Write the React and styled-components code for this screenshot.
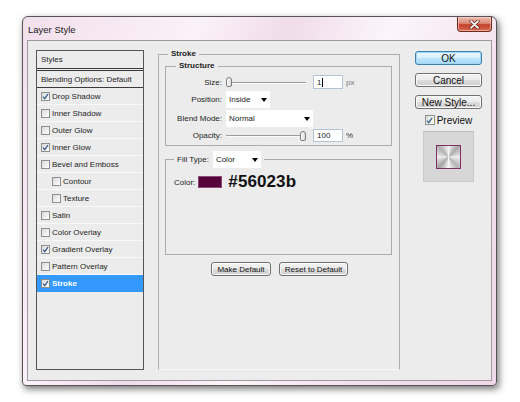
import React from "react";
import styled, { createGlobalStyle } from "styled-components";

const GlobalStyle = createGlobalStyle`
  html, body {
    margin: 0;
    padding: 0;
    background: #ffffff;
  }
  body {
    font-family: "Liberation Sans", Arial, sans-serif;
    color: #1c1c1c;
  }
`;

const Page = styled.div`
  width: 520px;
  height: 402px;
  padding: 16px 0 0 22px;
  box-sizing: border-box;
`;

const Window = styled.div`
  width: 475px;
  height: 370px;
  box-sizing: border-box;
  display: flex;
  flex-direction: column;
  padding: 0 4px 4px;
  border: 1px solid #58535a;
  border-radius: 6px 6px 4px 4px;
  background: linear-gradient(
    115deg,
    #f2e0ec 0%,
    #fbf1f8 28%,
    #f0dcea 42%,
    #fcf5fa 58%,
    #f3e1ed 78%,
    #efd8e7 100%
  );
  box-shadow: 2px 3px 7px rgba(0, 0, 0, 0.55);
`;

const TitleBar = styled.div`
  height: 23px;
  flex: none;
  display: flex;
  justify-content: space-between;
  align-items: flex-start;
`;

const Title = styled.span`
  font-size: 9.5px;
  color: #1b1b1b;
  padding: 7px 0 0 1px;
`;

const CloseButton = styled.div`
  width: 35px;
  height: 15px;
  box-sizing: border-box;
  border: 1px solid #6f2a20;
  border-top: none;
  border-radius: 0 0 4px 4px;
  background: linear-gradient(#eebcb0 0%, #dc8a76 45%, #c2412c 55%, #d8684f 100%);
  box-shadow: inset 0 0 0 1px rgba(255, 220, 210, 0.55);
  display: flex;
  align-items: center;
  justify-content: center;
`;

const Client = styled.div`
  flex: 1;
  display: flex;
  align-items: stretch;
  background: #ececec;
  border: 1px solid #a3979f;
  padding: 8px 0 10px 8px;
`;

/* ---------- styles list ---------- */

const StyleList = styled.div`
  width: 108px;
  box-sizing: border-box;
  margin-top: 1px;
  border: 1px solid #565656;
  display: flex;
  flex-direction: column;
  font-size: 8px;
`;

const ListHead = styled.div`
  height: ${(p) => p.$h}px;
  display: flex;
  align-items: center;
  padding-left: 4px;
  border-bottom: ${(p) => p.$double ? "3px double #3b3b3b" : "1px solid #3b3b3b"};
`;

const ListRow = styled.div`
  height: 16px;
  display: flex;
  align-items: center;
  gap: 2px;
  padding-left: ${(p) => (p.$indent ? 15 : 4)}px;
  border-bottom: 1px solid ${(p) => (p.$active ? "#3399ff" : "#f9f9f9")};
  background: ${(p) => (p.$active ? "#3399ff" : "transparent")};
  color: ${(p) => (p.$active ? "#ffffff" : "#1c1c1c")};
  font-weight: ${(p) => (p.$active ? "bold" : "normal")};
`;

const Box = styled.span`
  width: ${(p) => p.$size || 9}px;
  height: ${(p) => p.$size || 9}px;
  box-sizing: border-box;
  flex: none;
  border: 1px solid #8e8f8f;
  background: linear-gradient(135deg, #d9d9d9, #ffffff);
  display: inline-flex;
  align-items: center;
  justify-content: center;
`;

function Check({ on, size }) {
  return (
    <Box $size={size}>
      {on && (
        <svg width="7" height="7" viewBox="0 0 7 7">
          <path d="M1 3.6 L2.8 5.6 L6 1" fill="none" stroke="#37598a" strokeWidth="1.3" />
        </svg>
      )}
    </Box>
  );
}

/* ---------- groups ---------- */

const Panel = styled.fieldset`
  width: 242px;
  box-sizing: border-box;
  margin: 0 0 0 14px;
  padding: 0 7px 0 6px;
  border: 1px solid #acacac;
  border-bottom-color: #f7f7f7;
  display: flex;
  flex-direction: column;
  min-width: 0;
`;

const Group = styled.fieldset`
  margin: ${(p) => p.$top}px 0 0;
  padding: ${(p) => p.$pad};
  border: 1px solid #ababab;
  min-width: 0;
`;

const Legend = styled.legend`
  margin-left: ${(p) => p.$left}px;
  padding: 0 3px;
  font-size: 8px;
  font-weight: bold;
  line-height: 10px;
  color: #222;
`;

const FillLegend = styled.legend`
  margin-left: 8px;
  padding: 0 3px;
  height: 17px;
  display: flex;
  align-items: center;
  gap: 4px;
  font-size: 8px;
`;

const Rows = styled.div`
  display: flex;
  flex-direction: column;
  gap: 2px;
`;

const Row = styled.div`
  height: ${(p) => p.$h}px;
  display: flex;
  align-items: center;
  font-size: 8px;
`;

const Label = styled.span`
  width: 56px;
  margin-right: 4px;
  text-align: right;
  color: #1e1e1e;
`;

const Slider = styled.div`
  width: 80px;
  height: 11px;
  display: flex;
  align-items: center;
`;

const Track = styled.span`
  flex: ${(p) => p.$grow};
  height: 1px;
  background: #9c9c9c;
  box-shadow: 0 1px 0 #fafafa;
`;

const Knob = styled.span`
  width: 6px;
  height: 10px;
  box-sizing: border-box;
  flex: none;
  border: 1px solid #7c7c7c;
  border-radius: 3px 3px 2px 2px;
  background: linear-gradient(90deg, #ffffff, #dadada);
`;

const NumberBox = styled.div`
  width: 30px;
  height: ${(p) => p.$h}px;
  box-sizing: border-box;
  margin-left: 7px;
  padding-left: 3px;
  display: flex;
  align-items: center;
  background: #fff;
  border: 1px solid #b6c3d3;
`;

const Caret = styled.span`
  width: 1px;
  height: 9px;
  margin-left: 1px;
  background: #000;
`;

const Unit = styled.span`
  margin-left: 3px;
  color: ${(p) => p.$muted ? "#7a7a7a" : "#333"};
`;

const Select = styled.div`
  width: ${(p) => p.$w}px;
  height: 17px;
  box-sizing: border-box;
  padding: 0 3px 0 3px;
  display: flex;
  align-items: center;
  justify-content: space-between;
  background: #ffffff;
  font-size: 8px;
  font-weight: normal;
  color: #1a1a1a;
`;

const Arrow = styled.span`
  width: 0;
  height: 0;
  border-left: 3px solid transparent;
  border-right: 3px solid transparent;
  border-top: 4px solid #000;
`;

const ColorRow = styled.div`
  height: 20px;
  margin-top: 4px;
  padding-left: 8px;
  display: flex;
  align-items: center;
  font-size: 8px;
`;

const Swatch = styled.span`
  width: 24px;
  height: 12px;
  box-sizing: border-box;
  margin: 0 6px 0 3px;
  background: #56023b;
  border: 1px solid #8c4a76;
`;

const Hex = styled.span`
  font-size: 17px;
  font-weight: bold;
  color: #111;
  letter-spacing: 0.1px;
`;

const ButtonRow = styled.div`
  margin-top: 7px;
  display: flex;
  justify-content: center;
  gap: 8px;
  padding-left: 2px;
`;

const Button = styled.div`
  width: ${(p) => p.$w}px;
  height: ${(p) => p.$h || 14}px;
  box-sizing: border-box;
  display: flex;
  align-items: center;
  justify-content: center;
  font-size: ${(p) => p.$fs || 10}px;
  color: #111;
  border: 1px solid ${(p) => (p.$primary ? "#3c7fb1" : "#707070")};
  border-radius: 3px;
  background: ${(p) =>
    p.$primary
      ? "linear-gradient(#eaf6fd 0%, #d9f0fc 50%, #bee6fd 51%, #a7d9f5 100%)"
      : "linear-gradient(#f2f2f2 0%, #ebebeb 50%, #dddddd 51%, #cfcfcf 100%)"};
  box-shadow: inset 0 0 0 1px ${(p) => (p.$primary ? "#9fd9f7" : "#fbfbfb")};
`;

/* ---------- right column ---------- */

const Side = styled.div`
  width: 67px;
  margin: 2px 0 0 15px;
  display: flex;
  flex-direction: column;
`;

const ButtonStack = styled.div`
  display: flex;
  flex-direction: column;
  gap: 8px;
`;

const PreviewToggle = styled.div`
  margin-top: 4px;
  height: 14px;
  display: flex;
  align-items: center;
  justify-content: center;
  gap: 2px;
  font-size: 10px;
  color: #111;
`;

const PreviewBox = styled.div`
  width: 51px;
  height: 51px;
  box-sizing: border-box;
  margin-top: 4px;
  align-self: center;
  display: flex;
  align-items: center;
  justify-content: center;
  background: #d7d7d7;
  border: 1px solid #c9c9c9;
  border-top-color: #bcbcbc;
`;

const PreviewSquare = styled.div`
  width: 25px;
  height: 24px;
  box-sizing: border-box;
  border: 1px solid #7e2f63;
  background: conic-gradient(
    #f4f4f4,
    #a9a9a9 12%,
    #efefef 25%,
    #b4b4b4 38%,
    #f6f6f6 50%,
    #a5a5a5 62%,
    #eeeeee 75%,
    #b0b0b0 88%,
    #f4f4f4
  );
`;

const styleItems = [
  { name: "Drop Shadow", on: true },
  { name: "Inner Shadow" },
  { name: "Outer Glow" },
  { name: "Inner Glow", on: true },
  { name: "Bevel and Emboss" },
  { name: "Contour", indent: true },
  { name: "Texture", indent: true },
  { name: "Satin" },
  { name: "Color Overlay" },
  { name: "Gradient Overlay", on: true },
  { name: "Pattern Overlay" },
  { name: "Stroke", on: true, active: true },
];

function SliderControl({ value }) {
  return (
    <Slider>
      <Track $grow={value} />
      <Knob />
      <Track $grow={100 - value} />
    </Slider>
  );
}

export default function App() {
  return (
    <Page>
      <GlobalStyle />
      <Window>
        <TitleBar>
          <Title>Layer Style</Title>
          <CloseButton>
            <svg width="11" height="9" viewBox="0 0 11 9">
              <path d="M2 1.2 L9 7.8 M9 1.2 L2 7.8" stroke="#5a1e16" strokeWidth="3.2" strokeLinecap="round" />
              <path d="M2 1.2 L9 7.8 M9 1.2 L2 7.8" stroke="#ffffff" strokeWidth="1.8" strokeLinecap="round" />
            </svg>
          </CloseButton>
        </TitleBar>

        <Client>
          <StyleList>
            <ListHead $h={17} $double>Styles</ListHead>
            <ListHead $h={16}>Blending Options: Default</ListHead>
            {styleItems.map((item) => (
              <ListRow key={item.name} $indent={item.indent} $active={item.active}>
                <Check on={item.on} />
                {item.name}
              </ListRow>
            ))}
          </StyleList>

          <Panel>
            <Legend $left={3}>Stroke</Legend>

            <Group $top={2} $pad="4px 0 3px 0">
              <Legend $left={10}>Structure</Legend>
              <Rows>
                <Row $h={14}>
                  <Label>Size:</Label>
                  <SliderControl value={0} />
                  <NumberBox $h={14}>
                    1<Caret />
                  </NumberBox>
                  <Unit $muted>px</Unit>
                </Row>
                <Row $h={17}>
                  <Label>Position:</Label>
                  <Select $w={44}>
                    Inside
                    <Arrow />
                  </Select>
                </Row>
                <Row $h={17}>
                  <Label>Blend Mode:</Label>
                  <Select $w={87}>
                    Normal
                    <Arrow />
                  </Select>
                </Row>
                <Row $h={13}>
                  <Label>Opacity:</Label>
                  <SliderControl value={100} />
                  <NumberBox $h={13}>100</NumberBox>
                  <Unit>%</Unit>
                </Row>
              </Rows>
            </Group>

            <Group $top={5} $pad="0 0 62px 0">
              <FillLegend>
                Fill Type:
                <Select $w={48}>
                  Color
                  <Arrow />
                </Select>
              </FillLegend>
              <ColorRow>
                Color:
                <Swatch />
                <Hex>#56023b</Hex>
              </ColorRow>
            </Group>

            <ButtonRow>
              <Button $w={60} $fs={8}>Make Default</Button>
              <Button $w={69} $fs={8}>Reset to Default</Button>
            </ButtonRow>
          </Panel>

          <Side>
            <ButtonStack>
              <Button $w={67} $primary>OK</Button>
              <Button $w={67}>Cancel</Button>
              <Button $w={67}>New Style...</Button>
            </ButtonStack>
            <PreviewToggle>
              <Check on size={10} />
              Preview
            </PreviewToggle>
            <PreviewBox>
              <PreviewSquare />
            </PreviewBox>
          </Side>
        </Client>
      </Window>
    </Page>
  );
}
